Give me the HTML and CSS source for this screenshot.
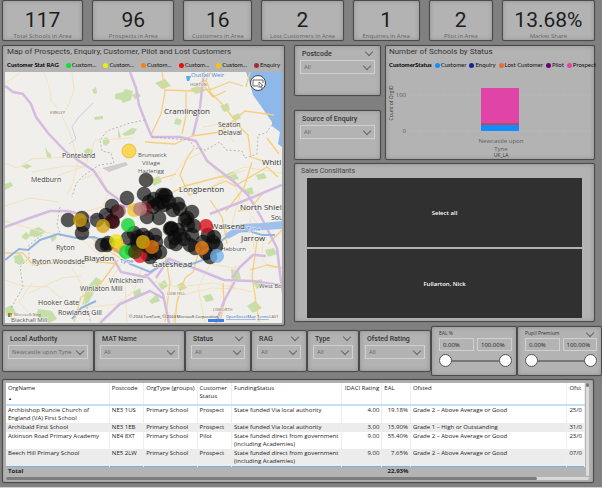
FILE: index.html
```html
<!DOCTYPE html>
<html lang="en">
<head>
<meta charset="utf-8">
<title>Schools in Area</title>
<link rel="stylesheet" href="styles.css">
</head>
<body>
<main class="report">
  <section class="cards">
    <div class="panel card"><strong>117</strong><span>Total Schools in Area</span></div>
    <div class="panel card"><strong>96</strong><span>Prospects in Area</span></div>
    <div class="panel card"><strong>16</strong><span>Customers in Area</span></div>
    <div class="panel card"><strong>2</strong><span>Lost Customers in Area</span></div>
    <div class="panel card"><strong>1</strong><span>Enquiries in Area</span></div>
    <div class="panel card"><strong>2</strong><span>Pilot in Area</span></div>
    <div class="panel card"><strong>13.68%</strong><span>Market Share</span></div>
  </section>

  <section class="middle">
    <article class="panel map-panel">
      <h2>Map of Prospects, Enquiry, Customer, Pilot and Lost Customers</h2>
      <div class="legend map-legend">
        <b>Customer Stat RAG</b>
        <span class="key green">Custom...</span>
        <span class="key yellow">Custom...</span>
        <span class="key orange">Custom...</span>
        <span class="key red">Custom...</span>
        <span class="key gold">Custom...</span>
        <span class="key maroon">Enquiry</span>
        <button class="more" aria-label="More"><svg viewBox="0 0 5 8"><circle cx="1" cy="4" r="4" fill="#eee"/><path d="M1 2l2.500 2L1 6z" fill="#111"/></svg></button>
      </div>
      <svg class="map" viewBox="5 72 277 251">
        <rect x="5" y="72" width="277" height="251" fill="#f0efeb"/>
        <path d="M246 72l4 12 3 11 10 14 9 13 0 4 8 6-2 12 4 3V72z" fill="#8fb8ea"/>
        <g fill="#c6dfa9">
          <path d="M115 94l8-2 2-3 8 2-2 9-8 3-2-3-6-1zM132 95l6-3 3 4-6 3zM92 90l4-3 1 6-3 1zM94 117l9-1v3l-8 1zM118 128l3 9-3 1zM122 134l10-6 5 1-3 5-9 2zM103 139l4-2 3 5-4 4-3-2zM45 146l3 6 3 2v5l-4-2zM21 166l6-2 5 2-5 3zM5 184l6-2 2 4-8 4zM88 148l5 2-1 4-6 1-2-4zM155 83l10-4 6 7-9 3zM190 89l9-4 6 6-9 3zM220 106l8-3 2 7-6 2zM176 118l6 2-2 5-6-1zM232 116l7-3 2 5-6 3zM150 180l9-4 3 6-8 4zM226 174l8-3 5 8-9 2zM256 175l8-2 3 5-9 2zM243 190l9-3 2 7-8 1zM30 230l9-3 7 5-9 5-8-1zM21 237l5-5 4 4-4 4zM14 256l7-2 4 8-5 3-5-2zM50 237l4-3 3 4-5 4zM38 309l14 2 5 8-8 4-13-7zM82 305l4-16 10-12 6 4-8 12-6 10zM5 308l7-3 4 8-10 3zM133 292l7-4 2 7-7 3zM149 301l8-7 3 7-8 3zM158 284l7-4 3 6-6 4zM231 269l8 2 2 8-9 2zM253 282l8-3 4 6-8 4zM247 306l8-5 7 7-9 5zM177 285l6-3 4 6-7 3zM203 296l8-2 3 6-8 2zM265 250l9-2 3 6-9 3z"/>
        </g>
        <g fill="none" stroke="#f3e3bd" stroke-width="1">
          <path d="M44 72l6 18 1 10 6 8M72 72l2 18-5 14-7 12 7 14 6 20 3 16M5 83l15-10M57 176l28-10 10-26 38-2M5 163l12 5 15-9 36-2M32 172l34-6 23 1M77 165l-4 18-6 12M5 221l38 11 30 4M25 263l37-4 22 8M29 293l33-15 19-2M83 240l14 13 18 5M110 190l-8 17-18 5M120 245l2 18-12 18-18 12M5 280l18 6 25 1 14 12M32 283l-13 19 14 15M72 268l9 15 4 24M125 283l2 40M142 267l-8 24-17 13-35 4M108 193l-9-21-17 7M203 127l18-3 13 18M203 153l18 25 25-8M170 180l14-19 25-12M214 185l29-18 39 6M240 194l-8 30-18 24M236 265l-6 22-12 36M181 242l30 22 29 5M210 264l-12 24 7 35M150 281l28 6 36-4 38 9M173 323l5-27 33-8 25 1M250 218l4 30 15 19 13 1M232 178l10 26 22 28-2 21M5 206l25-8 29 4"/>
        </g>
        <g fill="none" stroke="#f6cf7e" stroke-width="1.300" stroke-linejoin="round">
          <path d="M162 72l3 20-4 22-10 21M165 90l29 1 18-2 18-7 13 4M194 85l12-5 5 13 14 14 13 18 10 10 3 22 24 8M186 92l0 24-4 18M145 142l30 2 17-8 28-4 25-21 29 4M194 148l-7 10-7 17 9 20 18-6 19-8 9 5 32-19 11 10M232 180l-9-4-38 10-24 12M211 72l-8 13 10 12 13-6M250 72l-4 15M252 162l-8 26-18 23M267 138l12 16M5 253l18 0 10 12 20-2 32-3 32 4M118 260l-20 27-17 10-7 25M75 230l17 8 12 10 16 10M165 253l5 30-5 39M145 176l11 4 20-6M257 241l-5 35 7 46M200 248l-7 24-8 6-8 24-2 21M223 283l1 20-4 20M263 193l-13 16-12 2M250 270l17-5 15 3M268 244l14-14M210 200l12 17 5 27"/>
        </g>
        <g fill="none" stroke="#d5bbe0" stroke-width="2.500" stroke-linejoin="round">
          <path d="M5 86l8 6 10 2 8 10 5 13 12 16 18 19 28 19 13 20 15 11 18 13M130 72l6 16 3 17 9 23 4 9h28l16 4 11 20 26 20 15 14 13 22 16 31 4 33 7 42M204 72l-4 35-7 28M5 227l22-8 23-8 18 0 26 7 29-12 23 3M113 258l8 14 24 5 24-18 30 11 25 10 28 1 28 4M100 323l20-19 30-13 13 7M145 274l18 20 6 29M210 214l31-12 41-17M235 281l-11 20-8 22M169 258l-13 20M266 256l-13-1-13 12-8 11"/>
        </g>
        <path d="M93 103l-15 15-6 9 4 12-7 5" fill="none" stroke="#c2d3e8"/>
        <path d="M5 260l14-11 9 1 12-10 18-6 18 4 18-1 16 7 20 20 20 8 17-10 17 5 27-10 8-14 13-11 17-1 13 4h13M72 319l9-11 15-7" fill="none" stroke="#92b5e1" stroke-width="2"/>
        <path d="M225 234l16-10 22-1 19-2v8l-39 2-15 8z" fill="#9fc0ec"/>
        <g fill="none" stroke="#aaa8a6" stroke-width=".8" stroke-dasharray="2 2">
          <path d="M145 120l-15 3-23 8-7 9 2 11 9 2 3 10-15 2-16 11-7 8-4 13M152 137l37 3 6 8 10 2 15-8 6 8 16 1 3 7 12-4 1-19 8-2 10-14M60 207l-3 17 4 13M42 235l-13 10 0 13-9 9 3 20-13 23M87 307l4 16"/>
        </g>
        <path d="M102 168l24-6 2 3-19 7z" fill="#d0cbcc"/>
        <path d="M186 76h5l-2 5h-2z" fill="#4eaee8"/>
        <g class="places">
          <text x="164" y="114" class="town">Cramlington</text>
          <text x="179" y="192" class="town">Longbenton</text>
          <text x="218" y="127">Seaton</text><text x="218" y="135">Delaval</text>
          <text x="262" y="165" class="town">Whitl</text>
          <text x="62" y="158">Ponteland</text><text x="31" y="182">Medburn</text>
          <text x="138" y="157" class="soft">Brunswick</text><text x="142" y="165" class="soft">Village</text><text x="138" y="173" class="soft">Hazlerigg</text>
          <text x="240" y="210" class="town">North Shiel</text><text x="271" y="220">Sou</text>
          <text x="211" y="229" class="town">Wallsend</text><text x="241" y="241" class="town">Jarrow</text><text x="221" y="251" class="soft">Hebburn</text>
          <text x="56" y="250">Ryton</text><text x="32" y="264">Ryton Woodside</text><text x="84" y="261" class="town">Blaydon</text>
          <text x="152" y="267" class="town">Gateshead</text>
          <text x="109" y="283">Whickham</text><text x="80" y="291">Winlaton Mill</text>
          <text x="38" y="305">Hooker Gate</text><text x="58" y="315">Rowlands Gill</text><text x="11" y="322" class="soft">Blackhall Mill</text>
          <text x="259" y="288" class="soft">West Bo</text>
          <text x="50" y="114" class="area">KIRKLEY</text><text x="190" y="86" class="area">HORTON</text>
          <text x="167" y="295" class="area">LOW FELL</text><text x="213" y="311" class="area">USWORTH</text><text x="269" y="318" class="area">CAST</text>
          <text x="191" y="77" class="water">Outfall Weir</text><text x="247" y="231" class="water">Tyne</text><text x="120" y="263" class="water">Tyne</text>
        </g>
        <g class="dot">
          <circle cx="146" cy="180" r="7"/><circle cx="144" cy="194" r="7"/><circle cx="127" cy="198" r="7"/><circle cx="112" cy="206" r="7"/><circle cx="68" cy="220" r="7"/><circle cx="83" cy="225" r="7"/><circle cx="82" cy="218" r="7"/><circle cx="82" cy="233" r="7"/><circle cx="97" cy="220" r="7"/><circle cx="106" cy="215" r="7"/><circle cx="117" cy="212" r="7"/><circle cx="112" cy="221" r="7"/><circle cx="102" cy="245" r="7"/><circle cx="107" cy="245" r="7"/><circle cx="108" cy="243" r="7"/>
          <circle cx="147" cy="217" r="7"/><circle cx="149" cy="202" r="7"/><circle cx="153" cy="207" r="7"/><circle cx="154" cy="199" r="7"/><circle cx="159" cy="218" r="7"/><circle cx="162" cy="195" r="7"/><circle cx="165" cy="195" r="7"/><circle cx="166" cy="196" r="7"/><circle cx="162" cy="202" r="7"/><circle cx="164" cy="205" r="7"/><circle cx="158" cy="204" r="7"/><circle cx="169" cy="202" r="7"/><circle cx="173" cy="210" r="7"/><circle cx="178" cy="204" r="7"/><circle cx="180" cy="209" r="7"/><circle cx="192" cy="212" r="7"/><circle cx="187" cy="218" r="7"/><circle cx="185" cy="220" r="7"/>
          <circle cx="171" cy="228" r="7"/><circle cx="170" cy="229" r="7"/><circle cx="172" cy="229" r="7"/><circle cx="178" cy="230" r="7"/><circle cx="188" cy="225" r="7"/><circle cx="194" cy="226" r="7"/><circle cx="155" cy="235" r="7"/><circle cx="156" cy="242" r="7"/><circle cx="171" cy="242" r="7"/><circle cx="176" cy="244" r="7"/><circle cx="175" cy="238" r="7"/><circle cx="180" cy="235" r="7"/><circle cx="184" cy="239" r="7"/><circle cx="192" cy="235" r="7"/><circle cx="190" cy="245" r="7"/><circle cx="195" cy="248" r="7"/>
          <circle cx="128" cy="238" r="7"/><circle cx="134" cy="233" r="7"/><circle cx="138" cy="237" r="7"/><circle cx="143" cy="235" r="7"/><circle cx="147" cy="238" r="7"/><circle cx="138" cy="245" r="7"/><circle cx="137" cy="241" r="7"/><circle cx="145" cy="246" r="7"/><circle cx="132" cy="250" r="7"/><circle cx="147" cy="254" r="7"/><circle cx="160" cy="252" r="7"/><circle cx="155" cy="253" r="7"/><circle cx="150" cy="257" r="7"/><circle cx="208" cy="235" r="7"/><circle cx="214" cy="237" r="7"/><circle cx="213" cy="242" r="7"/><circle cx="216" cy="246" r="7"/><circle cx="203" cy="242" r="7"/><circle cx="206" cy="253" r="7"/><circle cx="210" cy="257" r="7"/>
        </g>
        <g fill-opacity=".78">
          <circle cx="129" cy="151" r="7" fill="#ffcf2d" stroke="#d9a918" stroke-width=".6"/>
          <circle cx="119" cy="211" r="7" fill="#7b2a35" fill-opacity=".5"/><circle cx="113" cy="222" r="7" fill="#3c0810"/>
          <circle cx="145" cy="209" r="7" fill="#a1141c" fill-opacity=".5"/><circle cx="134" cy="210" r="7" fill="#f3c431"/><circle cx="140" cy="209" r="7" fill="#ad7c7e"/>
          <circle cx="80" cy="220" r="7" fill="#d1a210"/><circle cx="103" cy="226" r="7" fill="#d1a210"/><circle cx="128" cy="225" r="7" fill="#0bd42e"/>
          <circle cx="118" cy="246" r="7" fill="#ff9b32" fill-opacity=".7"/><circle cx="116" cy="241" r="7" fill="#e5e60e"/><circle cx="126" cy="252" r="7" fill="#12df2c"/>
          <circle cx="140" cy="256" r="7" fill="#e91828"/><circle cx="135" cy="252" r="7" fill="#3c410b"/><circle cx="147" cy="246" r="7" fill="#211a04"/><circle cx="143" cy="242" r="7" fill="#e3b211"/><circle cx="152" cy="247" r="7" fill="#df750b"/>
          <circle cx="206" cy="226" r="7" fill="#d50b18"/><circle cx="202" cy="248" r="7" fill="#ed7d13"/><circle cx="217" cy="256" r="7" fill="#72b5ed"/>
        </g>
        <circle cx="258" cy="83" r="7.500" fill="#fff" stroke="#444" stroke-width="1"/>
        <path d="M258 86h-5v-6h10v3" fill="none" stroke="#555" stroke-width=".9"/><path d="M259 82l4 3.500-1.800.300 1 2-1 .500-1-2-1.200 1.200z" fill="#fff" stroke="#222" stroke-width=".6"/>
        <path d="M8 313h2v2H8z" fill="#f25022"/><path d="M10 313h2v2h-2z" fill="#7fba00"/><path d="M8 315h2v2H8z" fill="#00a4ef"/><path d="M10 315h2v2h-2z" fill="#ffb900"/>
        <g class="credit"><text x="14" y="316" fill="#777">Microsoft Bing</text><text x="129" y="318">© 2024 TomTom, © 2024 Microsoft Corporation,</text>
        <a href="#osm"><text x="226" y="318">OpenStreetMap</text></a><a href="#terms"><text x="257" y="318">Terms</text></a></g>
        <path d="M208 319h16v3h-16z" fill="#3d7ee0"/>
      </svg>
    </article>

    <div class="side">
      <div class="top">
        <div class="slicers">
          <div class="panel slicer collapsible"><label for="postcode">Postcode</label><div class="pick"><select id="postcode"><option>All</option></select></div></div>
          <div class="panel slicer"><label for="source">Source of Enquiry</label><div class="pick"><select id="source"><option>All</option></select></div></div>
        </div>
        <article class="panel chart-panel">
          <h2>Number of Schools by Status</h2>
          <div class="legend">
            <b>CustomerStatus</b>
            <span class="key blue">Customer</span><span class="key navy">Enquiry</span><span class="key coral">Lost Customer</span><span class="key purple">Pilot</span><span class="key pink">Prospect</span>
          </div>
          <svg class="chart" viewBox="388 72 206 86">
            <path d="M410 95h182M410 131h182" stroke="#c4c4c4" stroke-width=".7" stroke-dasharray="1 2"/>
            <path d="M482 88h38v35h-38z" fill="#e044a7"/><path d="M482 123h38v2h-38z" fill="#b94a66"/><path d="M482 125h38v6h-38z" fill="#118dff"/>
            <text x="407" y="97" text-anchor="end">100</text><text x="407" y="133" text-anchor="end">0</text>
            <text x="502" y="143" text-anchor="middle">Newcastle upon</text><text x="502" y="151" text-anchor="middle">Tyne</text>
            <text x="502" y="157" text-anchor="middle" class="axis">UK_LA</text>
            <text transform="translate(394 103) rotate(-90)" text-anchor="middle" class="axis">Count of OrgID</text>
          </svg>
        </article>
      </div>
      <article class="panel sales">
        <h3>Sales Conslitants</h3>
        <button>Select all</button>
        <button>Fullarton, Nick</button>
      </article>
    </div>
  </section>

  <section class="filters">
    <div class="panel slicer"><label for="la">Local Authority</label><div class="pick"><select id="la"><option>Newcastle upon Tyne</option></select></div></div>
    <div class="panel slicer"><label for="mat">MAT Name</label><div class="pick"><select id="mat"><option>All</option></select></div></div>
    <div class="panel slicer collapsible"><label for="status">Status</label><div class="pick"><select id="status"><option>All</option></select></div></div>
    <div class="panel slicer collapsible"><label for="rag">RAG</label><div class="pick"><select id="rag"><option>All</option></select></div></div>
    <div class="panel slicer collapsible"><label for="type">Type</label><div class="pick"><select id="type"><option>All</option></select></div></div>
    <div class="panel slicer"><label for="ofsted">Ofsted Rating</label><div class="pick"><select id="ofsted"><option>All</option></select></div></div>
    <div class="panel range">
      <label for="eal-min">EAL %</label>
      <div class="bounds"><input id="eal-min" value="0.00%"><input aria-label="EAL maximum" value="100.00%"></div>
      <div class="track"><input type="range" aria-label="EAL from" value="0"><input type="range" aria-label="EAL to" value="100"></div>
    </div>
    <div class="panel range collapsible">
      <label for="pp-min">Pupil Premium</label>
      <div class="bounds"><input id="pp-min" value="0.00%"><input aria-label="Pupil Premium maximum" value="100.00%"></div>
      <div class="track"><input type="range" aria-label="Pupil Premium from" value="0"><input type="range" aria-label="Pupil Premium to" value="100"></div>
    </div>
  </section>

  <section class="panel schools">
    <div class="table-row">
      <table>
        <colgroup><col class="c-name"><col class="c-code"><col class="c-type"><col class="c-status"><col class="c-fund"><col class="c-idaci"><col class="c-eal"><col class="c-ofsted"><col class="c-date"></colgroup>
        <thead><tr><th>OrgName<span class="sort">▲</span></th><th>Postcode</th><th>OrgType (groups)</th><th>Customer<br>Status</th><th>FundingStatus</th><th class="num">IDACI Rating</th><th>EAL</th><th>Ofsted</th><th>Ofst</th></tr></thead>
        <tbody>
          <tr><td>Archbishop Runcie Church of<br>England (VA) First School</td><td>NE3 1US</td><td>Primary School</td><td>Prospect</td><td>State funded Via local authority</td><td class="num">4.00</td><td class="num">19.18%</td><td>Grade 2 – Above Average or Good</td><td>25/0</td></tr>
          <tr><td>Archibald First School</td><td>NE3 1EB</td><td>Primary School</td><td>Prospect</td><td>State funded Via local authority</td><td class="num">3.00</td><td class="num">15.90%</td><td>Grade 1 – High or Outstanding</td><td>31/0</td></tr>
          <tr><td>Atkinson Road Primary Academy</td><td>NE4 8XT</td><td>Primary School</td><td>Pilot</td><td>State funded direct from government<br>(including Academies)</td><td class="num">9.00</td><td class="num">55.40%</td><td>Grade 2 – Above Average or Good</td><td>23/0</td></tr>
          <tr><td>Beech Hill Primary School</td><td>NE5 2LW</td><td>Primary School</td><td>Prospect</td><td>State funded direct from government<br>(including Academies)</td><td class="num">9.00</td><td class="num">7.65%</td><td>Grade 2 – Above Average or Good</td><td>07/0</td></tr>
        </tbody>
        <tfoot><tr><td>Total</td><td></td><td></td><td></td><td></td><td></td><td class="num">22.93%</td><td></td><td></td></tr></tfoot>
      </table>
      <div class="vbar"><i></i></div>
    </div>
    <div class="hbar"><i></i></div>
  </section>
</main>
</body>
</html>
```
FILE: styles.css
```css
* { box-sizing: border-box; }
html { background: #808080; }
body { margin: 0; font: 6px/8px "Open Sans", "Noto Sans", sans-serif; color: #222; }
h2, h3 { margin: 0; font-weight: 400; font-family: Roboto, sans-serif; color: #333; white-space: nowrap; }
h2 { font-size: 8px; line-height: 12px; }
h3 { font-size: 7px; line-height: 10px; color: #444; }
button, input, select { font: inherit; color: inherit; margin: 0; min-width: 0; }

.report { border-bottom: 2px solid #cfcfcf; padding-bottom: 4px; }
.panel {
  min-width: 0;
  background: #b3b3b3;
  border: 1px solid #4b4b4b;
  border-radius: 2px;
  box-shadow: inset 0 0 4px #8e8e8e, 0 0 1px #4b4b4b;
}

.cards {
  display: grid;
  grid-template-columns: 81fr 82fr 69fr 82fr 67fr 64fr 93fr;
  gap: 9px;
  padding: 0 7px 0 2px;
}
.card { display: flex; flex-direction: column; align-items: center; padding: 7px 0 0; overflow: hidden; white-space: nowrap; }
.card strong { font: 400 21px/24px Roboto, sans-serif; color: #1d1d1d; }
.card span { font-size: 6px; line-height: 8px; color: #666; }

.middle { display: grid; grid-template-columns: 283fr 301fr; gap: 9px; padding: 4px 7px 0 2px; }
.map-panel { padding: 0 2px 2px; }
.map-panel h2, .chart-panel h2 { padding-left: 2px; }
.legend { display: flex; align-items: center; gap: 3px; height: 14px; padding-left: 2px; font: 6px/8px Lato, sans-serif; white-space: nowrap; color: #111; }
.map-legend { gap: 7px; }
.legend b { color: #000; }
.key { display: flex; align-items: center; gap: 1px; }
.key::before { content: ""; width: 5px; height: 5px; border-radius: 50%; background: var(--key); }
.green { --key: #09e62c; } .yellow { --key: #e6f20a; } .orange { --key: #f58216; } .red { --key: #f00a0a; }
.gold { --key: #fcc30b; } .maroon { --key: #9c2c38; } .blue { --key: #118dff; } .navy { --key: #12239e; }
.coral { --key: #e66c37; } .purple { --key: #6b007b; } .pink { --key: #e044a7; }
.more { margin-left: auto; padding: 0; border: 0; background: none; display: flex; }
.more svg { width: 5px; height: 8px; }
.map, .chart { display: block; width: 100%; }

.places text { font-size: 7px; fill: #444; paint-order: stroke; stroke: #f4f3f0; stroke-width: 1px; }
.places .town { font-size: 8px; fill: #333; }
.places .soft { font-size: 6px; fill: #555; }
.places .area { font-size: 4px; fill: #86624f; }
.places .water { font-size: 6px; fill: #4a7fce; }
.dot { fill: #0c0c0c; fill-opacity: .68; stroke: #000; stroke-opacity: .5; stroke-width: .6px; }
.credit { font-size: 4px; fill: #333; }
.credit a { fill: #2f6dca; text-decoration: underline; }

.side { display: flex; flex-direction: column; gap: 3px; padding-bottom: 4px; min-width: 0; }
.top { display: grid; grid-template-columns: 87fr 210fr; gap: 4px; }
.slicers { display: grid; grid-template-rows: 1fr 1fr; gap: 14px; }
.slicer { position: relative; padding: 3px 5px 8px; }
.slicer label { display: block; padding-left: 2px; font: 500 7px/10px Roboto, sans-serif; color: #333; white-space: nowrap; }
.pick { position: relative; margin-top: 1px; }
.pick select {
  display: block; width: 100%; height: 14px; padding: 0 10px 0 3px;
  appearance: none; border: 1px solid #d0d0d0; border-radius: 0; background: none; color: #666;
}
.pick::after, .collapsible::before {
  content: ""; position: absolute; width: 5px; height: 5px;
  border: solid #666; border-width: 0 1px 1px 0; transform: rotate(45deg);
}
.pick::after { right: 5px; top: 3px; pointer-events: none; }
.collapsible { position: relative; }
.collapsible::before { right: 8px; top: 3px; }

.chart-panel { padding: 0 1px 1px; }
.chart text { font-size: 6px; fill: #5c5c5c; }
.chart .axis { font-size: 5px; fill: #333; }

.sales { flex: 1; display: grid; grid-template-rows: auto 1fr 1fr; gap: 2px; padding: 2px 12px 3px; }
.sales h3 { margin-left: -6px; }
.sales button { border: 0; background: #303030; color: #fff; font-weight: 600; }

.filters { display: grid; grid-template-columns: 92fr 91fr 66fr 56fr 52fr 72fr 86fr 85fr; align-items: center; padding-left: 2px; }
.filters .slicer { height: 42px; }
.range { height: 50px; padding: 2px 4px 2px 7px; }
.range label { display: block; font-size: 5px; line-height: 9px; color: #333; }
.bounds { display: grid; grid-template-columns: 1fr 1fr; gap: 3px; }
.bounds input { width: 100%; height: 13px; padding: 0 3px; border: 1px solid #d0d0d0; background: none; }
.track { display: grid; margin-top: 3px; background: linear-gradient(#777, #777) center / 80% 2px no-repeat; }
.track input { grid-area: 1 / 1; appearance: none; width: 100%; height: 13px; background: none; pointer-events: none; }
.track input::-webkit-slider-thumb {
  appearance: none; width: 13px; height: 13px; border: 1px solid #555; border-radius: 50%; background: #fff; pointer-events: auto;
}

.schools { margin: 3px 8px 0 2px; padding: 3px 4px 2px 3px; box-shadow: inset 0 0 3px #8e8e8e, 0 0 1px #4b4b4b; }
.table-row { display: flex; gap: 1px; }
table { flex: 1; min-width: 0; table-layout: fixed; border-collapse: collapse; background: #fff; }
.c-name { width: 18%; } .c-code { width: 6%; } .c-type { width: 9%; } .c-status { width: 6%; } .c-fund { width: 19%; }
.c-idaci { width: 7%; } .c-eal { width: 5%; } .c-ofsted { width: 28%; } .c-date { width: 2%; }
th, td { padding: 0 2px 1px; text-align: left; vertical-align: top; font-weight: 400; white-space: nowrap; overflow: hidden; border-right: 1px solid #eee; }
th { height: 20px; padding-top: 1px; }
thead { border-bottom: 2px solid #c3e0fa; }
tbody tr:nth-child(even) { background: #ececec; }
.num { text-align: right; }
.sort { display: block; font-size: 4px; margin-top: 3px; }
tfoot { background: #b3b3b3; border-top: 1px solid #7aaee6; }
tfoot td { font-weight: 700; border-right: 0; }
.vbar { width: 3px; background: #ddd; border-radius: 2px; }
.vbar i { display: block; height: 4px; border-radius: 2px; background: #777; }
.hbar { height: 3px; margin-top: 1px; background: #d8d8d8; border-radius: 2px; }
.hbar i { display: block; width: 91%; height: 3px; border-radius: 2px; background: #7c7c7c; }
```
